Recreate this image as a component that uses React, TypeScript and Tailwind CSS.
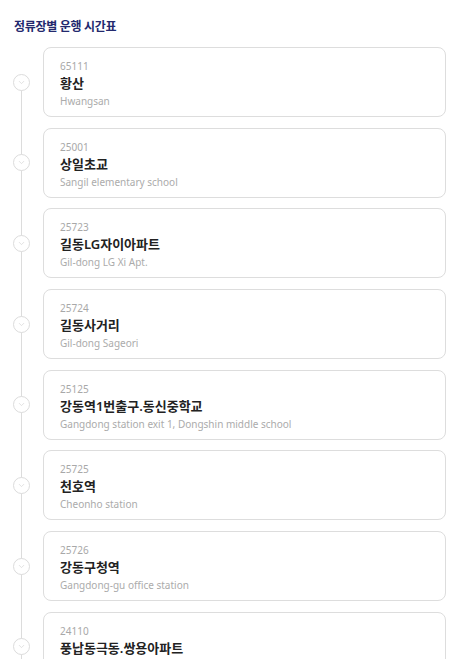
import { ChevronDown } from "lucide-react";

type Stop = {
  id: string;
  name: string;
  nameEn: string;
};

const STOPS: readonly Stop[] = [
  { id: "65111", name: "황산", nameEn: "Hwangsan" },
  { id: "25001", name: "상일초교", nameEn: "Sangil elementary school" },
  { id: "25723", name: "길동LG자이아파트", nameEn: "Gil-dong LG Xi Apt." },
  { id: "25724", name: "길동사거리", nameEn: "Gil-dong Sageori" },
  { id: "25125", name: "강동역1번출구.동신중학교", nameEn: "Gangdong station exit 1, Dongshin middle school" },
  { id: "25725", name: "천호역", nameEn: "Cheonho station" },
  { id: "25726", name: "강동구청역", nameEn: "Gangdong-gu office station" },
  { id: "24110", name: "풍납동극동.쌍용아파트", nameEn: "Pungnap-dong Geukdong.Ssangyong Apt." },
];

export default function App() {
  return (
    <div
      className="min-h-[659px] bg-white pl-[13px] pr-[19px] pt-[19px]"
      style={{ fontFamily: '"Noto Sans", "Noto Sans CJK KR", sans-serif' }}
    >
      <h2 className="pl-px text-[12px] font-bold leading-[16px] tracking-[-0.3px] text-[#23296e]">
        정류장별 운행 시간표
      </h2>
      <div className="relative mt-[12px] flex flex-col gap-[10.7px]">
        <div className="absolute bottom-0 left-[8px] top-[34px] w-px bg-[#dcdcdc]" />
        {STOPS.map((stop) => (
          <div key={stop.id} className="relative flex items-center">
            <span className="flex h-[17px] w-[17px] shrink-0 items-center justify-center rounded-full border border-[#dcdcdc] bg-white">
              <ChevronDown className="h-[9px] w-[9px] text-[#d8d8d8]" strokeWidth={2} />
            </span>
            <div className="ml-[13px] flex h-[70px] flex-1 flex-col rounded-[8px] border border-[#dddddd] bg-white pl-[16px] pt-[11px]">
              <span className="text-[10px] leading-[14px] text-[#a8a8a8]">{stop.id}</span>
              <span className="text-[13px] font-semibold leading-[20px] text-[#222222]">{stop.name}</span>
              <span className="text-[10px] leading-[16px] text-[#ababab]">{stop.nameEn}</span>
            </div>
          </div>
        ))}
      </div>
    </div>
  );
}
